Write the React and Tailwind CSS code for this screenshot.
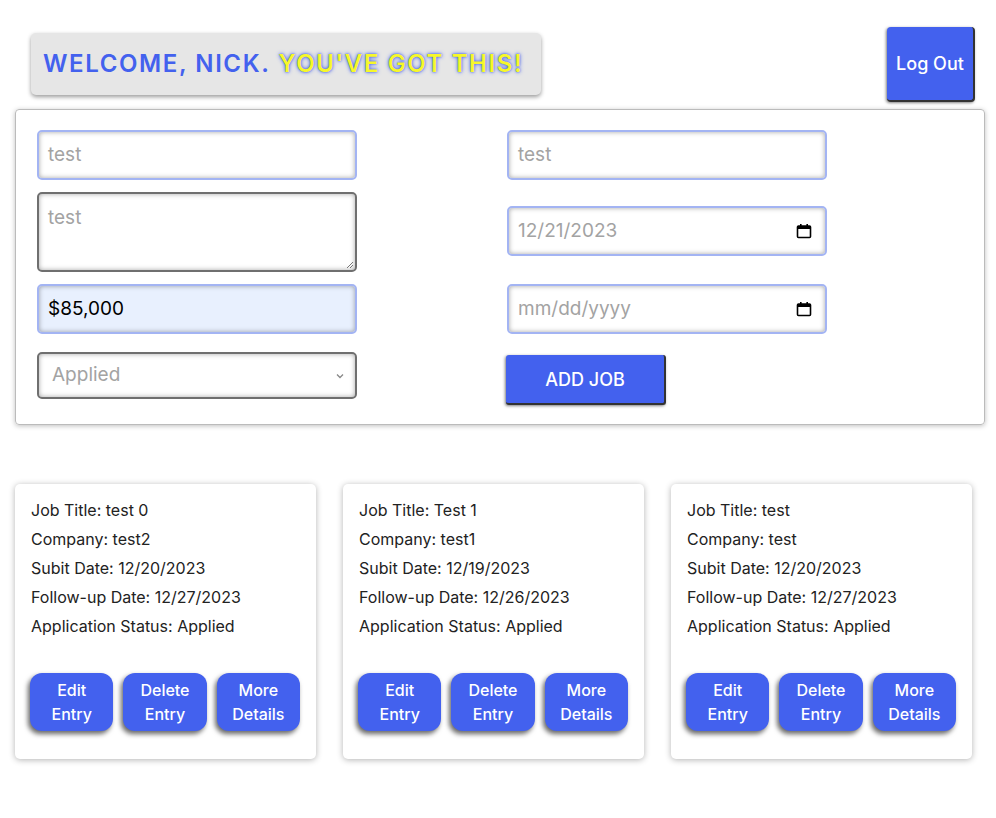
import React from 'react';

const jobs = [
  { title: 'test 0', company: 'test2', submit: '12/20/2023', follow: '12/27/2023', status: 'Applied' },
  { title: 'Test 1', company: 'test1', submit: '12/19/2023', follow: '12/26/2023', status: 'Applied' },
  { title: 'test', company: 'test', submit: '12/20/2023', follow: '12/27/2023', status: 'Applied' },
];

const blueInput =
  "w-[320px] h-[50px] rounded-[5px] border-2 border-[#a3b4f3] px-[9px] text-[19px] shadow-[inset_0_0_5px_rgba(0,0,0,0.35)] flex items-center";
const grayInput =
  "w-[320px] rounded-[5px] border-2 border-[#6f6f6f] bg-white px-[9px] text-[19px] text-[#a3a3a3] shadow-[inset_0_0_5px_rgba(0,0,0,0.35)]";

const CalendarIcon = () => (
  <svg width="16" height="16" viewBox="0 0 16 16" className="ml-auto mr-[4px]">
    <rect x="1.5" y="3" width="13" height="11.5" rx="1" fill="none" stroke="#000" strokeWidth="1.6" />
    <rect x="1.5" y="3" width="13" height="3" fill="#000" />
    <rect x="4" y="1" width="1.6" height="3" fill="#000" />
    <rect x="10.4" y="1" width="1.6" height="3" fill="#000" />
  </svg>
);

const JobCard = ({ job }) => (
  <div className="w-[301px] h-[275px] rounded-[5px] bg-white shadow-[0_1px_6px_rgba(0,0,0,0.3)] px-[16px] pt-[15px] flex flex-col">
    <div className="flex flex-col gap-[7px] text-[16px] leading-[22px] text-[#222]">
      <p>Job Title: {job.title}</p>
      <p>Company: {job.company}</p>
      <p>Subit Date: {job.submit}</p>
      <p>Follow-up Date: {job.follow}</p>
      <p>Application Status: {job.status}</p>
    </div>
    <div className="flex gap-[10px] mt-[36px] ml-[-1px]">
      {[['Edit', 'Entry'], ['Delete', 'Entry'], ['More', 'Details']].map(([a, b]) => (
        <button
          key={a}
          className="w-[84px] h-[58px] rounded-[12px] bg-[#4361ee] text-white text-[16px] font-medium leading-[24px] shadow-[-2px_3px_5px_rgba(0,0,0,0.6)]"
        >
          {a}
          <br />
          {b}
        </button>
      ))}
    </div>
  </div>
);

const App = () => {
  return (
    <div className="min-h-[818px] bg-white font-['Inter',sans-serif] pl-[15px] pr-[11px] pt-[26px]">
      <div className="flex items-start justify-between">
        <div className="mt-[7px] ml-[16px] w-[510px] h-[62px] rounded-[5px] bg-[#e6e6e6] shadow-[0_2px_4px_rgba(0,0,0,0.4)] flex items-center pl-[12px] text-[24px] font-semibold tracking-[1.6px]">
          <span className="text-[#4361ee]">WELCOME, NICK.</span>
          <span className="ml-[8px] text-[#f7f72a] [text-shadow:0_0_4px_#4361ee,0_0_2px_#4361ee]">YOU'VE GOT THIS!</span>
        </div>
        <button className="mt-[1px] mr-[10px] w-[88px] h-[75px] rounded-[4px] bg-[#4361ee] text-white text-[18px] font-medium border-r-2 border-b-2 border-[#333] shadow-[-1px_1px_3px_rgba(0,0,0,0.5)]">
          Log Out
        </button>
      </div>

      <div className="mt-[7px] h-[316px] rounded-[4px] border border-[#bbb] shadow-[0_1px_5px_rgba(0,0,0,0.25)] pl-[21px] pt-[20px] grid grid-cols-[470px_1fr]">
        <div className="flex flex-col">
          <div className={`${blueInput} bg-white text-[#a3a3a3]`}>test</div>
          <div className={`${grayInput} h-[80px] mt-[12px] pt-[10px] relative`}>
            test
            <svg width="8" height="8" viewBox="0 0 8 8" className="absolute right-[1px] bottom-[1px]">
              <path d="M7 1L1 7M7 4L4 7" stroke="#777" strokeWidth="1" />
            </svg>
          </div>
          <div className={`${blueInput} mt-[12px] bg-[#e8f0fe] text-black`}>$85,000</div>
          <div className={`${grayInput} h-[47px] mt-[18px] flex items-center pl-[13px]`}>
            Applied
            <svg width="10" height="10" viewBox="0 0 10 10" className="ml-auto mr-[1px]">
              <path d="M2 3.5L5 6.5L8 3.5" fill="none" stroke="#888" strokeWidth="1.3" />
            </svg>
          </div>
        </div>
        <div className="flex flex-col">
          <div className={`${blueInput} bg-white text-[#a3a3a3]`}>test</div>
          <div className={`${blueInput} bg-white text-[#a3a3a3] mt-[26px]`}>
            12/21/2023
            <CalendarIcon />
          </div>
          <div className={`${blueInput} bg-white text-[#a3a3a3] mt-[28px]`}>
            mm/dd/yyyy
            <CalendarIcon />
          </div>
          <button className="mt-[21px] ml-[-1px] w-[160px] h-[50px] rounded-[3px] bg-[#4361ee] text-white text-[18px] font-medium border-r-2 border-b-2 border-[#333] shadow-[-1px_1px_3px_rgba(0,0,0,0.5)]">
            ADD JOB
          </button>
        </div>
      </div>

      <div className="mt-[59px] flex gap-[27px]">
        {jobs.map((job, i) => (
          <JobCard key={i} job={job} />
        ))}
      </div>
    </div>
  );
};

export default App;
